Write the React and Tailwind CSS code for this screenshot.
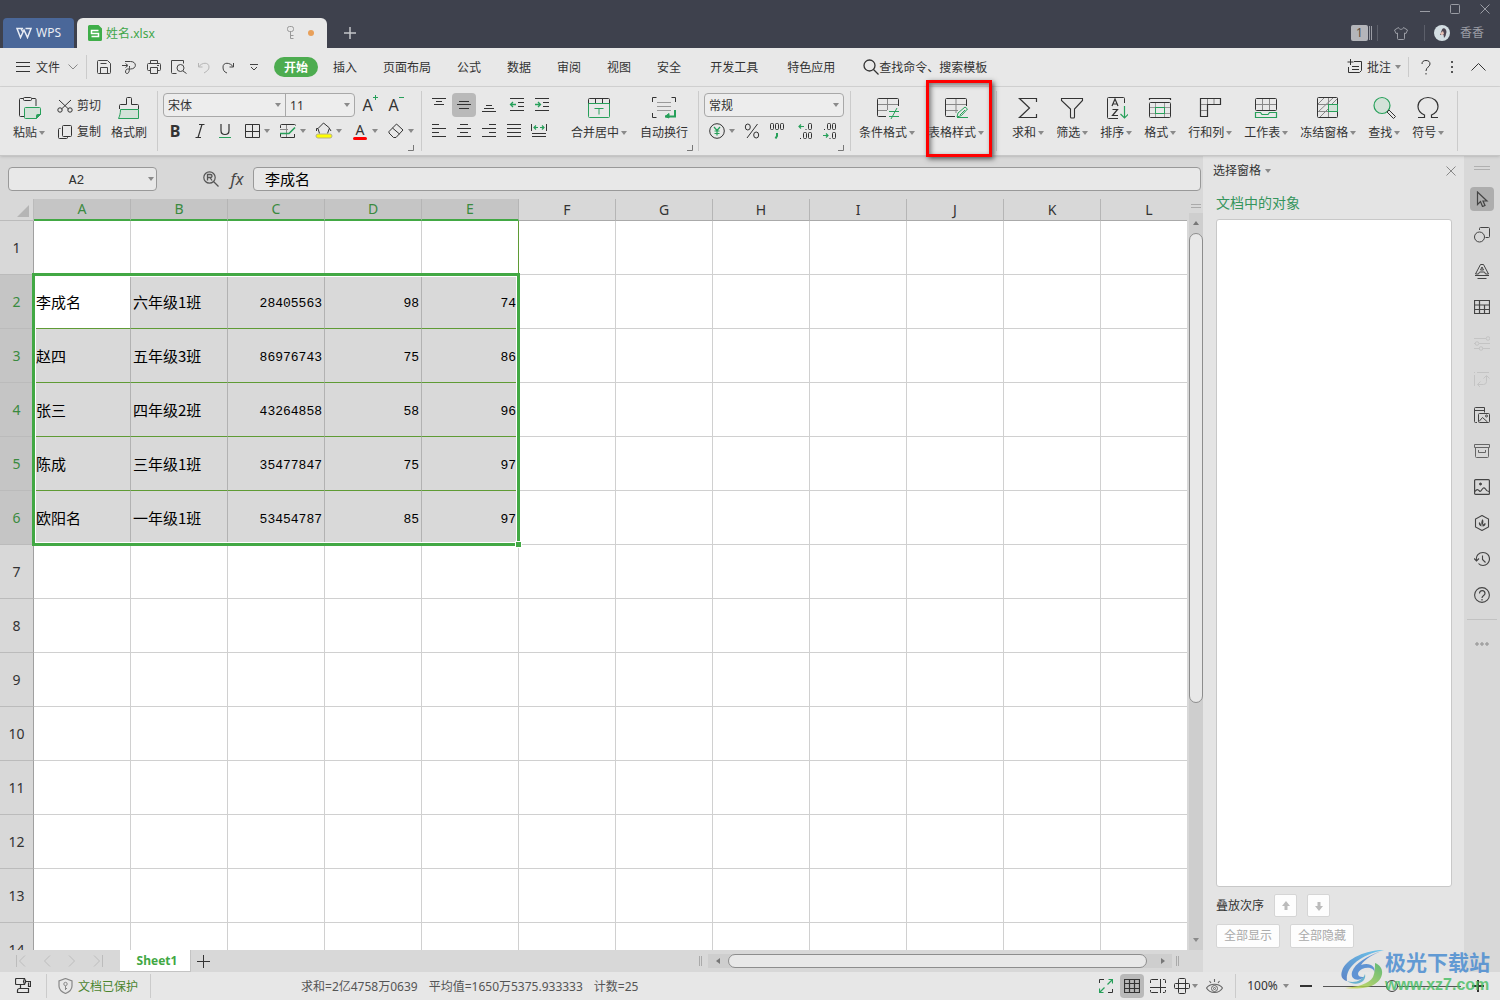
import { useState } from 'react';
import clsx from 'clsx';

const TABS = ['插入', '页面布局', '公式', '数据', '审阅', '视图', '安全'];
const EXTRA_TABS = ['开发工具', '特色应用'];
const COLUMNS = ['A', 'B', 'C', 'D', 'E', 'F', 'G', 'H', 'I', 'J', 'K', 'L'];
const ROWS = [1, 2, 3, 4, 5, 6, 7, 8, 9, 10, 11, 12, 13, 14];

const DATA = {
  2: ['李成名', '六年级1班', 28405563, 98, 74],
  3: ['赵四', '五年级3班', 86976743, 75, 86],
  4: ['张三', '四年级2班', 43264858, 58, 96],
  5: ['陈成', '三年级1班', 35477847, 75, 97],
  6: ['欧阳名', '一年级1班', 53454787, 85, 97],
};

const GREEN = '#27a05a';

export default function App() {
  return (
    <div className="flex h-screen flex-col overflow-hidden bg-[#d8d8d8] font-['Noto_Sans','Noto_Sans_CJK_SC',sans-serif] text-xs text-[#333]">
      <TitleBar />
      <MenuBar />
      <Ribbon />
      <main className="flex min-h-0 flex-1">
        <section className="flex min-w-0 flex-1 flex-col">
          <FormulaBar />
          <div className="flex min-h-0 flex-1">
            <Sheet />
            <VerticalScroll />
          </div>
          <SheetTabs />
        </section>
        <ObjectPane />
        <SideBar />
      </main>
      <StatusBar />
    </div>
  );
}

function Svg({ w = 16, h = w, className, children }) {
  return (
    <svg
      width={w}
      height={h}
      viewBox={`0 0 ${w} ${h}`}
      fill="none"
      stroke="currentColor"
      className={clsx('shrink-0', className)}
      aria-hidden="true"
    >
      {children}
    </svg>
  );
}

function Caret({ className }) {
  return (
    <Svg w={6} h={4} className={clsx('text-[#8a8a8a]', className)}>
      <path d="M0 0h6L3 4z" fill="currentColor" stroke="none" />
    </Svg>
  );
}

function Divider({ dark, className }) {
  return <div className={clsx('w-px shrink-0', dark ? 'bg-[#5c5f6a]' : 'bg-[#cbcbcb]', className)} />;
}

function IconButton({ label, className, children }) {
  return (
    <button type="button" aria-label={label} className={clsx('flex shrink-0 items-center justify-center', className)}>
      {children}
    </button>
  );
}

/* ---------- title bar ---------- */

function TitleBar() {
  return (
    <header className="flex h-12 shrink-0 items-end bg-[#3e414d] pl-[3px]">
      <button type="button" className="flex h-[30px] w-[71px] items-center justify-center gap-1 rounded-t bg-[#4a6799] text-[#e8ecf4]">
        <Svg w={16} h={12}>
          <path d="M7 1.5H1l3.5 9L8 3l3.5 7.5 3.500-9H9.500M5 1.500l1.500 3" strokeWidth="1.5" />
        </Svg>
        WPS
      </button>
      <div className="ml-[3px] flex h-[30px] w-[250px] items-center rounded-t-md bg-[#e8e8e8] px-[11px]">
        <Svg w={14} h={16}>
          <path d="M1.5 0h9L14 3.5v11a1.5 1.5 0 0 1-1.5 1.5h-11A1.5 1.5 0 0 1 0 14.5v-13A1.5 1.5 0 0 1 1.5 0z" fill="#3fae49" stroke="none" />
          <path d="M10.5 5.500h-7v3h7v3h-7" stroke="#fff" strokeWidth="1.5" />
        </Svg>
        <span className="ml-1 flex-1 pt-[2px] text-[#3fa648]">姓名.xlsx</span>
        <Svg w={10} h={14} className="text-[#999]">
          <rect x="1.5" y=".5" width="6" height="5" rx="2" />
          <path d="M4.5 5.500v7M4.500 9.500h3M4.500 12.500h3" />
        </Svg>
        <span className="mr-[2px] ml-3 h-[6px] w-[6px] rounded-full bg-[#e8a05a]" />
      </div>
      <IconButton label="新建标签" className="h-[30px] w-[46px] text-[#c4c5c9]">
        <Svg w={12}>
          <path d="M6 0v12M0 6h12" strokeWidth="1.5" />
        </Svg>
      </IconButton>

      <div className="ml-auto flex h-full flex-col items-end text-[#9a9ca4]">
        <div className="flex h-[18px] items-center">
          <IconButton label="最小化" className="h-full w-[30px]">
            <Svg w={10}><path d="M0 7.5h10" /></Svg>
          </IconButton>
          <IconButton label="最大化" className="h-full w-[30px]">
            <Svg w={10}><rect x=".5" y=".5" width="9" height="9" rx="1" /></Svg>
          </IconButton>
          <IconButton label="关闭" className="h-full w-[30px]">
            <Svg w={10}><path d="m.5.5 9 9M9.5.5l-9 9" /></Svg>
          </IconButton>
        </div>
        <div className="flex h-[30px] items-center pr-4">
          <span className="flex h-4 w-[17px] items-center justify-center rounded-[2px] bg-[#b4b5ba] text-[#5b4c3c]">1</span>
          <Svg w={5} h={16}><path d="M1.5 1v14M3.5 1v14" /></Svg>
          <Divider dark className="ml-1 h-4" />
          <IconButton label="换肤" className="w-[46px]">
            <Svg w={14}>
              <path d="M4.5 1.5C5 4 9 4 9.5 1.5l4 2.500L12 7.500 10.500 7v5.500a1 1 0 0 1-1 1h-5a1 1 0 0 1-1-1V7L2 7.500.5 4z" />
            </Svg>
          </IconButton>
          <Divider dark className="h-4" />
          <Svg w={16} className="ml-[9px]">
            <circle cx="8" cy="8" r="8" fill="#d3dde2" stroke="none" />
            <path d="M8 4.500C9.500 2 12.500 4 12.500 7l-1 4-1.500 2-.5-3.500-3.500.5z" fill="#4d4551" stroke="none" />
            <path d="m6 8.500 3-2.500 1 2.500-2 2z" fill="#e8c3b7" stroke="none" />
          </Svg>
          <span className="ml-[10px]">香香</span>
        </div>
      </div>
    </header>
  );
}

/* ---------- menu ---------- */

function MenuBar() {
  return (
    <nav className="flex h-[39px] shrink-0 items-center border-b border-[#d3d3d3] bg-[#e8e8e8]">
      <button type="button" className="ml-4 flex items-center">
        <Svg w={14} h={12}><path d="M0 1.5h14M0 5.5h14M0 10.5h14" /></Svg>
        <span className="ml-[6px] pt-[2px]">文件</span>
        <Svg w={10} h={6} className="ml-2 text-[#888]"><path d="m.5.5 4.500 4.500L9.500.5" /></Svg>
      </button>
      <Divider className="mr-1 ml-2 h-6" />
      <QuickAccess />
      <button type="button" className="mr-[7px] ml-2 h-5 w-11 rounded-full bg-[#4dac50] pt-px font-bold text-white">开始</button>
      <div className="ml-2 flex gap-[26px] pt-[2px]">
        {TABS.map((tab) => <button key={tab} type="button">{tab}</button>)}
      </div>
      <div className="ml-[29px] flex gap-[29px] pt-[2px]">
        {EXTRA_TABS.map((tab) => <button key={tab} type="button">{tab}</button>)}
      </div>
      <button type="button" className="ml-7 flex items-center">
        <Svg w={16}>
          <circle cx="6.5" cy="6.5" r="5.5" strokeWidth="1.3" />
          <path d="m10.5 10.5 5 5" strokeWidth="1.3" />
        </Svg>
        <span className="pt-px">查找命令、搜索模板</span>
      </button>

      <div className="ml-auto flex items-center">
        <button type="button" className="flex items-center">
          <Svg w={16}>
            <path d="M7 2.500h7.500v9l-2 2h-11V8M3.500 0v6M.5 3h6M5 7.500h7M5 10.500h7" />
          </Svg>
          <span className="ml-1 pt-[2px]">批注</span>
          <Caret className="ml-1" />
        </button>
        <Divider className="ml-[7px] h-5" />
        <IconButton label="帮助" className="ml-3 w-[10px]">
          <Svg w={10} h={15}>
            <path d="M1 4C1 1.500 2.500.5 5 .5s4 1.200 4 3.500c0 3-4 3-4 7M5 13v1.500" />
          </Svg>
        </IconButton>
        <IconButton label="更多" className="ml-[19px] w-1 text-[#555]">
          <Svg w={2} h={12}><path d="M1 0v2M1 5v2M1 10v2" strokeWidth="2" /></Svg>
        </IconButton>
        <IconButton label="折叠功能区" className="mr-[14px] ml-[17px]">
          <Svg w={15} h={8}><path d="m.5 7.500 7-7 7 7" /></Svg>
        </IconButton>
      </div>
    </nav>
  );
}

function QuickAccess() {
  return (
    <div className="flex text-[#444]">
      <IconButton label="保存" className="w-[25px]">
        <Svg w={14}>
          <path d="M1.5.5h9l3 3v9a1 1 0 0 1-1 1h-11a1 1 0 0 1-1-1v-11a1 1 0 0 1 1-1zM3.500 13.500v-6h7v6M3.500 3.500h6" />
        </Svg>
      </IconButton>
      <IconButton label="输出为PDF" className="w-[25px]">
        <Svg w={14}>
          <path d="M3 1.500h5.500c6.500 0 6.500 7.500 0 7.500h-3c-2 0-3 4.500-.5 4.500S7.500 9 7.500 6M0 5.500h5M3.500 3.500l2.500 2-2.500 2" />
        </Svg>
      </IconButton>
      <IconButton label="打印" className="w-[25px]">
        <Svg w={14}>
          <path d="M3.500 3.500v-3h7v3M3.500 10.500h-2a1 1 0 0 1-1-1v-5a1 1 0 0 1 1-1h11a1 1 0 0 1 1 1v5a1 1 0 0 1-1 1h-2M3.500 7.500h7v6h-7zM10 5.500h2" />
        </Svg>
      </IconButton>
      <IconButton label="打印预览" className="w-[25px]">
        <Svg w={16} h={14}>
          <path d="M5.500 13.500h-4a1 1 0 0 1-1-1v-12h12v3M12 11l3.500 2.500" />
          <circle cx="9.5" cy="8" r="3.5" />
        </Svg>
      </IconButton>
      <IconButton label="撤销" className="w-[25px] text-[#b5b5b5]">
        <Svg w={13}>
          <path d="M1.500 2v4h4M1.500 6C5 1 12 1 12 6c0 3-2 4-5 6" />
        </Svg>
      </IconButton>
      <IconButton label="恢复" className="w-[25px]">
        <Svg w={13}>
          <path d="M11.500 2v4h-4M11.500 6C8 1 1 1 1 6c0 3 1 5 4 6" />
        </Svg>
      </IconButton>
      <IconButton label="自定义快速访问工具栏" className="w-[25px]">
        <Svg w={8}><path d="M0 1.500h8M1 4l3 3 3-3" /></Svg>
      </IconButton>
    </div>
  );
}

/* ---------- ribbon ---------- */

function BigButton({ label, caret = true, children }) {
  return (
    <button type="button" className="flex shrink-0 flex-col items-center gap-[5px]">
      <Svg w={24}>{children}</Svg>
      <span className="flex h-4 items-center gap-[2px] whitespace-nowrap">
        {label}
        {caret && <Caret />}
      </span>
    </button>
  );
}

function DropIcon({ label, children }) {
  return (
    <button type="button" aria-label={label} className="flex items-center gap-[3px]">
      {children}
      <Caret />
    </button>
  );
}

function Corner() {
  return (
    <Svg w={6} className="mt-1 self-end text-[#777]"><path d="M5.500 0v5.500H0" /></Svg>
  );
}

function Ribbon() {
  return (
    <div className="z-10 flex h-[69px] shrink-0 border-b border-[#c6c6c6] bg-[#e8e8e8] shadow-sm">
      <div className="flex gap-3 pt-[9px] pl-[13px]">
        <BigButton label="粘贴">
          <path d="M7.500 20.500h-4a1 1 0 0 1-1-1v-16a1 1 0 0 1 1-1h3M15 2.500h3a1 1 0 0 1 1 1V10" />
          <rect x="6.500" y="1.500" width="8" height="3" rx="1" />
          <path d="M8.500 11.500h14a1 1 0 0 1 1 1v6l-4 4h-11a1 1 0 0 1-1-1v-9a1 1 0 0 1 1-1z" fill="#d3e2d8" stroke={GREEN} />
          <path d="M23.500 18.500h-3a1 1 0 0 0-1 1v3z" fill={GREEN} stroke={GREEN} />
        </BigButton>
        <div className="flex flex-col gap-[10px] pt-[2px]">
          <button type="button" className="flex h-4 items-center gap-1">
            <Svg w={16} h={14}>
              <path d="m2 1 9.500 9M14 1 4.500 10" />
              <circle cx="3" cy="11" r="2.200" />
              <circle cx="13" cy="11" r="2.200" />
            </Svg>
            剪切
          </button>
          <button type="button" className="flex h-4 items-center gap-1">
            <Svg w={16}>
              <rect x="5.500" y="1.500" width="9" height="11" rx="1" />
              <path d="M3.500 4.500h-1a1 1 0 0 0-1 1v8a1 1 0 0 0 1 1h7a1 1 0 0 0 1-1v-1" />
            </Svg>
            复制
          </button>
        </div>
        <div className="-ml-[2px]">
          <BigButton label="格式刷" caret={false}>
            <path d="M2.500 13V9.500a1 1 0 0 1 1-1h6v-6a1 1 0 0 1 1-1h3a1 1 0 0 1 1 1v6h6a1 1 0 0 1 1 1V13" />
            <path d="M3.500 13.500h18v9h-20c1-2 2-5 2-9z" fill="#d3e2d8" stroke={GREEN} />
          </BigButton>
        </div>
      </div>

      <Divider className="my-1 ml-[10px]" />
      <FontGroup />
      <Divider className="my-1 ml-[7px]" />

      <div className="flex flex-col pt-[6px] pl-[5px]">
        <div className="flex">
          <AlignButtons />
          <div className="ml-[17px] flex gap-[13px] pt-[3px]">
            <BigButton label="合并居中">
              <path d="M1.500 8V3.500a1 1 0 0 1 1-1h19a1 1 0 0 1 1 1V8M8.500 3v4M15.500 3v4" />
              <path d="M1.500 7.500h21v13a1 1 0 0 1-1 1h-19a1 1 0 0 1-1-1zM7.500 12.500h9M12 12.500v6" stroke={GREEN} />
            </BigButton>
            <BigButton label="自动换行" caret={false}>
              <path d="M4.500 1.500h-4V6M19.500 1.500h4V6M.5 17v4.500h4" />
              <path d="M5 6.500h14M5 10.500h14M5 14.500h14" stroke="#999" />
              <path d="M23 14v6.500H13" stroke={GREEN} strokeWidth="2" />
              <path d="m17 17.500-4 3 4 1.500z" stroke={GREEN} fill={GREEN} />
            </BigButton>
          </div>
        </div>
        <div className="-mr-[5px] flex flex-col"><Corner /></div>
      </div>

      <Divider className="my-1 ml-[10px]" />
      <NumberGroup />
      <Divider className="my-1 ml-[6px]" />

      <div className="ml-[8px] flex gap-[13px] pt-[9px]">
        <BigButton label="条件格式">
          <path d="M11 20.500H3.500a1 1 0 0 1-1-1v-16a1 1 0 0 1 1-1h19a1 1 0 0 1 1 1V10" />
          <path d="M3 8.500h20M3 14.500h9M12.500 3v11" stroke="#888" />
          <path d="M14 15.500h10M14 20.500h10M22 12l-6 11" stroke={GREEN} />
        </BigButton>
        <div className="relative">
          <BigButton label="表格样式">
            <path d="M11 20.500H2.500a1 1 0 0 1-1-1v-16a1 1 0 0 1 1-1h19a1 1 0 0 1 1 1V10" />
            <path d="M2 8.500h20M2 14.500h12M12 3v14" stroke="#888" />
            <path d="m13 21 1-4 7-6 2.500 2-6 6.500zM13 21.500h11M16 19l5-5" stroke={GREEN} />
          </BigButton>
          <div className="pointer-events-none absolute -top-4 -left-[2px] h-[77px] w-[66px] border-[3px] border-[#f00] shadow-[2px_2px_5px_#555,inset_2px_2px_5px_#777]" />
        </div>
      </div>

      <Divider className="my-1 ml-[12px]" />

      <div className="ml-[15px] flex gap-3 pt-[9px]">
        <BigButton label="求和">
          <path d="M20.500 6V2.500h-17l10 9.500-10 9.500h17V18" strokeWidth="1.200" />
        </BigButton>
        <BigButton label="筛选">
          <path d="M1.500 2.500h21v2L14.500 13v8a1 1 0 0 1-1 1h-2a1 1 0 0 1-1-1v-8L1.500 4.500z" strokeWidth="1.100" />
        </BigButton>
        <BigButton label="排序">
          <path d="M14 22.500H4.500a1 1 0 0 1-1-1v-19a1 1 0 0 1 1-1h15a1 1 0 0 1 1 1V7" />
          <path d="m8 10 3-7 3 7M9 8h4M8.500 13.500h5l-5 6h5.500" strokeWidth="1.200" />
          <path d="M20.500 10v12M16.500 18l4 4 4-4" stroke={GREEN} strokeWidth="1.200" />
        </BigButton>
        <BigButton label="格式">
          <path d="M1.500 4V2.500h21V4" strokeWidth="1.200" />
          <rect x="1.500" y="6.500" width="21" height="15" rx="1" />
          <path d="M2 11.500h20M2 17.500h20M7.500 7v14M16.500 7v14" stroke="#999" />
          <rect x="7.500" y="11.500" width="9" height="6" stroke={GREEN} fill="#e8e8e8" />
        </BigButton>
        <BigButton label="行和列">
          <path d="M2.500 2.500h20v6h-13v12h-7z" strokeWidth="1.200" />
          <path d="M9.500 3v5M16 3v5M3 8.500h6M3 14.500h6" stroke="#888" />
        </BigButton>
        <BigButton label="工作表">
          <rect x="1.500" y="2.500" width="21" height="12" rx="1" />
          <path d="M2 8.500h20M8.500 3v11M15.500 3v11" stroke="#888" />
          <path d="M1.500 21.500v-5h5l1.500 2h6l1.500-2h7v5z" stroke={GREEN} strokeWidth="1.200" />
        </BigButton>
        <BigButton label="冻结窗格">
          <path d="M2 8.500h20M2 15.500h10M12.500 2v20M2 8l6-6M3 15l14-13M3 22l9-9M16 8l6-6" stroke="#888" />
          <rect x="1.500" y="1.500" width="20" height="20" rx="1" />
          <rect x="12.500" y="8.500" width="9" height="7" stroke={GREEN} fill="#d3e2d8" />
        </BigButton>
        <BigButton label="查找">
          <circle cx="10" cy="9.500" r="8" stroke={GREEN} fill="#d3e2d8" strokeWidth="1.200" />
          <path d="m15 16 2-2 6.500 6.500-2 2z" />
        </BigButton>
        <BigButton label="符号">
          <path d="M2 21.500h6.500V19C4 17 2 14 2 10.500 2 5 6.500 1.500 12 1.500S22 5 22 10.500C22 14 20 17 15.500 19v2.500H22" strokeWidth="1.200" />
        </BigButton>
      </div>
      <Divider className="my-1 ml-[13px]" />
    </div>
  );
}

function FontGroup() {
  return (
    <div className="flex flex-col pt-[6px] pl-[5px]">
      <div className="flex h-6 items-center">
        <div className="flex h-6 rounded border border-[#a8a8a8] bg-[#ededed]">
          <Select label="字体" value="宋体" className="w-[121px]" />
          <div className="w-px bg-[#a8a8a8]" />
          <Select label="字号" value="11" className="w-[68px]" />
        </div>
        <IconButton label="增大字号" className="ml-[6px] w-[18px] items-start text-base leading-5">
          A<Svg w={5} className="text-[#27a05a]"><path d="M0 2.500h5M2.500 0v5" /></Svg>
        </IconButton>
        <IconButton label="减小字号" className="ml-2 w-[18px] items-start text-base leading-5">
          A<Svg w={5} className="text-[#27a05a]"><path d="M0 2.500h5" /></Svg>
        </IconButton>
      </div>
      <div className="mt-1 flex h-5 items-center">
        <button type="button" className="w-6 text-base leading-5 font-bold">B</button>
        <IconButton label="倾斜" className="w-[25px]">
          <Svg w={10} h={14}><path d="M4 .5h5.500M.5 13.500H6M7 .5l-4 13" strokeWidth="1.200" /></Svg>
        </IconButton>
        <IconButton label="下划线" className="mr-[6px] w-[25px]">
          <Svg w={12} h={14}>
            <path d="M2 0v6.500C2 9 3.500 10.500 6 10.500S10 9 10 6.500V0" strokeWidth="1.200" />
            <path d="M0 13.500h12" stroke={GREEN} />
          </Svg>
        </IconButton>
        <div className="flex gap-[9px]">
          <DropIcon label="边框">
            <Svg w={18}><path d="M2.500 2.500h14v13h-14zM2.500 9.500h14M9.500 2.500v13" /></Svg>
          </DropIcon>
          <DropIcon label="绘图边框">
            <Svg w={18}>
              <path d="M1.500 6V3.500a1 1 0 0 1 1-1h13a1 1 0 0 1 1 1M1.500 12v2.500a1 1 0 0 0 1 1h13V12" />
              <path d="M7.500 3v12M1 7.500h8" stroke="#888" />
              <path d="M1 11.500h9l6-6" stroke={GREEN} strokeWidth="1.600" />
            </Svg>
          </DropIcon>
          <DropIcon label="填充颜色">
            <Svg w={18}>
              <path d="M4.500 11.500 3 6.500 8.500 1l6 5-2 5.500M3 6.500H1.500V9M14.500 6.500 16 9" />
              <rect x="1" y="12" width="16" height="4" rx="2" fill="#ff0" stroke="#b5b08a" />
            </Svg>
          </DropIcon>
          <DropIcon label="字体颜色">
            <span className="flex w-[18px] flex-col items-center text-sm leading-[14px]">
              A
              <span className="h-[3px] w-[14px] rounded-full bg-[#f00]" />
            </span>
          </DropIcon>
          <DropIcon label="清除">
            <Svg w={18}><path d="m2 9.500 7.500-7.500 6.500 6-7 7.500H6.500L2 11zM5.500 6l7 6" /></Svg>
          </DropIcon>
        </div>
      </div>
      <Corner />
    </div>
  );
}

function Select({ label, value, className }) {
  return (
    <label className={clsx('relative flex items-center', className)}>
      <select aria-label={label} defaultValue={value} className="h-full w-full appearance-none bg-transparent pt-[2px] pl-1 outline-none">
        <option>{value}</option>
      </select>
      <Caret className="pointer-events-none absolute right-1" />
    </label>
  );
}

function AlignButtons() {
  const cell = 'h-6 w-6';
  const lowCell = 'h-5 w-6';
  return (
    <div className="flex flex-col gap-1">
      <div className="flex gap-px">
        <IconButton label="顶端对齐" className={cell}>
          <Svg w={14}><path d="M0 .5h14M4 3.500h6M2 6.500h10" /></Svg>
        </IconButton>
        <IconButton label="垂直居中" className="h-6 w-6 rounded bg-[#b9b9b9]">
          <Svg w={14}><path d="M2 3.500h10M0 6.500h14M2 10.500h10" /></Svg>
        </IconButton>
        <IconButton label="底端对齐" className={cell}>
          <Svg w={14}><path d="M4 7.500h6M2 10.500h10M0 13.500h14" /></Svg>
        </IconButton>
        <IconButton label="减少缩进" className="ml-[3px] h-6 w-6">
          <Svg w={16} h={14}>
            <path d="M1 .5h14M9 4.500h6M9 8.500h6M1 12.500h14" />
            <path d="M7 6.500H1.500M4 4 1.500 6.500 4 9" stroke={GREEN} strokeWidth="1.300" />
          </Svg>
        </IconButton>
        <IconButton label="增加缩进" className={cell}>
          <Svg w={16} h={14}>
            <path d="M1 .5h14M9 4.500h6M9 8.500h6M1 12.500h14" />
            <path d="M1 6.500h5.500M4 4l2.500 2.500L4 9" stroke={GREEN} strokeWidth="1.300" />
          </Svg>
        </IconButton>
      </div>
      <div className="flex gap-px">
        <IconButton label="左对齐" className={lowCell}>
          <Svg w={14}><path d="M0 .5h7M0 4.500h14M0 8.500h7M0 12.500h14" /></Svg>
        </IconButton>
        <IconButton label="水平居中" className={lowCell}>
          <Svg w={14}><path d="M3 .5h8M0 4.500h14M3 8.500h8M0 12.500h14" /></Svg>
        </IconButton>
        <IconButton label="右对齐" className={lowCell}>
          <Svg w={14}><path d="M7 .5h7M0 4.500h14M7 8.500h7M0 12.500h14" /></Svg>
        </IconButton>
        <IconButton label="两端对齐" className={lowCell}>
          <Svg w={14}><path d="M0 .5h14M0 4.500h14M0 8.500h14M0 12.500h14" /></Svg>
        </IconButton>
        <IconButton label="分散对齐" className={lowCell}>
          <Svg w={16} h={14}>
            <path d="M.5 0v7M15.500 0v7M1 9.500h14M1 12.500h14" />
            <path d="M3 3.500h4M9 3.500h4M5 1.500l-2 2 2 2M11 1.500l2 2-2 2" stroke={GREEN} strokeWidth="1.200" />
          </Svg>
        </IconButton>
      </div>
    </div>
  );
}

function NumberGroup() {
  return (
    <div className="flex flex-col pt-[6px] pl-[5px]">
      <div className="flex h-6 rounded border border-[#a8a8a8] bg-[#ededed]">
        <Select label="数字格式" value="常规" className="w-[138px]" />
      </div>
      <div className="mt-1 flex h-5 items-center">
        <button type="button" aria-label="货币" className="ml-[5px] flex items-center gap-1">
          <Svg w={16}>
            <circle cx="8" cy="8" r="7.300" />
            <path d="m5 4 3 3.500L11 4M8 7.500v5M5.500 8h5M5.500 10.500h5" stroke={GREEN} strokeWidth="1.200" />
          </Svg>
          <Caret />
        </button>
        <IconButton label="百分比" className="ml-2 w-[18px]">
          <Svg w={16}>
            <path d="M13.500 1 3 15" />
            <ellipse cx="3.800" cy="4" rx="2.500" ry="3" />
            <ellipse cx="12.200" cy="12" rx="2.500" ry="3" />
          </Svg>
        </IconButton>
        <IconButton label="千位分隔" className="ml-2 w-4">
          <Svg w={16}>
            <rect x="1.500" y=".5" width="3" height="6" rx="1" />
            <rect x="6.500" y=".5" width="3" height="6" rx="1" />
            <rect x="11.500" y=".5" width="3" height="6" rx="1" />
            <path d="M8 10v3l-1.500 2.500" stroke={GREEN} strokeWidth="2" />
          </Svg>
        </IconButton>
        <IconButton label="增加小数位" className="ml-[13px] w-4">
          <Svg w={16}>
            <path d="M6 3.500H1M3 1.500l-2 2 2 2" stroke={GREEN} strokeWidth="1.200" />
            <rect x="10.500" y=".5" width="3" height="6" rx="1" />
            <rect x="5.500" y="9.500" width="3" height="6" rx="1" />
            <rect x="10.500" y="9.500" width="3" height="6" rx="1" />
            <path d="M7.500 6.500h1M2 15.500h1" />
          </Svg>
        </IconButton>
        <IconButton label="减少小数位" className="ml-2 w-4">
          <Svg w={16}>
            <rect x="5.500" y=".5" width="3" height="6" rx="1" />
            <rect x="10.500" y=".5" width="3" height="6" rx="1" />
            <rect x="10.500" y="9.500" width="3" height="6" rx="1" />
            <path d="M1 12.500h5M4 10.500l2 2-2 2" stroke={GREEN} strokeWidth="1.200" />
            <path d="M2 6.500h1M7.500 15.500h1" />
          </Svg>
        </IconButton>
      </div>
      <Corner />
    </div>
  );
}

/* ---------- sheet ---------- */

function FormulaBar() {
  return (
    <div className="flex h-[43px] shrink-0 items-center pt-[2px] pr-[2px] pl-2">
      <label className="relative flex w-[149px] items-center">
        <input
          aria-label="名称框"
          defaultValue="A2"
          className="h-6 w-full rounded border border-[#999] bg-[#e8e8e8] pt-[3px] pr-3 text-center font-['Liberation_Mono',monospace] text-[13px] outline-none"
        />
        <Caret className="pointer-events-none absolute right-[3px]" />
      </label>
      <IconButton label="浏览公式结果" className="ml-[46px] text-[#555]">
        <Svg w={16}>
          <circle cx="6.500" cy="6.500" r="5.700" strokeWidth="1.200" />
          <path d="M4.500 9.500v-6h3c2 0 2 3 0 3h-3M7 6.500l2 3M10.500 10.500l5 5" strokeWidth="1.300" />
        </Svg>
      </IconButton>
      <button type="button" className="ml-[10px] w-4 text-base leading-5 text-[#444] italic">fx</button>
      <input
        aria-label="编辑栏"
        defaultValue="李成名"
        className="ml-2 h-6 min-w-0 flex-1 rounded border border-[#999] bg-[#e8e8e8] px-[11px] text-[15px] text-black outline-none"
      />
    </div>
  );
}

function Sheet() {
  return (
    <div className="relative min-w-0 flex-1 overflow-hidden bg-white">
      <table className="w-[1198px] table-fixed border-separate border-spacing-0">
        <thead>
          <tr className="h-[22px] text-sm leading-5">
            <th className="w-[34px] border-r border-b border-[#bbb] bg-[#d8d8d8] p-0">
              <Svg w={33} h={20} className="text-[#b5b5b5]">
                <path d="M29 5v12H17z" fill="currentColor" stroke="none" />
              </Svg>
            </th>
            {COLUMNS.map((col, i) => (
              <th
                key={col}
                scope="col"
                className={clsx(
                  'w-[97px] border-r border-r-[#b5b5b5] p-0 font-normal',
                  i < 5 ? 'border-b-2 border-b-[#42a844] bg-[#c5c5c5] text-[#3a8a3f]' : 'border-b border-b-[#aaa] bg-[#d8d8d8]',
                )}
              >
                {col}
              </th>
            ))}
          </tr>
        </thead>
        <tbody>
          {ROWS.map((row) => (
            <tr key={row} className="h-[54px]">
              <th
                scope="row"
                className={clsx(
                  'border-r border-b border-r-[#a0a0a0] border-b-[#bbb] p-0 text-sm font-normal',
                  DATA[row] ? 'bg-[#c5c5c5] text-[#3a8a3f]' : 'bg-[#d8d8d8]',
                )}
              >
                {row}
              </th>
              {COLUMNS.map((col, i) => <Cell key={col} row={row} index={i} />)}
            </tr>
          ))}
        </tbody>
      </table>

      {/* selection A2:E6 */}
      <div className="pointer-events-none absolute top-[74px] left-8 h-[273px] w-[488px] border-[3px] border-[#42a844] inset-ring inset-ring-white">
        <span className="absolute -right-[5px] -bottom-[5px] h-[7px] w-[7px] border border-white bg-[#42a844]" />
      </div>
    </div>
  );
}

function rightBorder(row, index, selected) {
  if (row === 1 && index === 4) return 'border-r-[#5f9b35]';
  return selected ? 'border-r-[#b2b2b2]' : 'border-r-[#d0d0d0]';
}

function Cell({ row, index }) {
  const value = DATA[row]?.[index];
  const selected = value !== undefined;
  const isNumber = typeof value === 'number';
  return (
    <td
      className={clsx(
        'border-r border-b px-[2px] whitespace-nowrap text-black',
        rightBorder(row, index, selected),
        selected ? 'border-b-[#5f9b35]' : 'border-b-[#d0d0d0]',
        selected && !(row === 2 && index === 0) && 'bg-[#d9d9d9]',
        isNumber
          ? "pt-1 pb-0 text-right font-['Liberation_Mono',monospace] text-[13px]"
          : "py-0 font-['Noto_Sans_CJK_SC',sans-serif] text-[15px] leading-5",
      )}
    >
      {value}
    </td>
  );
}

function VerticalScroll() {
  return (
    <div className="flex w-4 shrink-0 flex-col items-end">
      <Svg w={14} h={14} className="text-[#aaa]"><path d="M2 5.500h10M2 8.500h10" /></Svg>
      <div className="flex w-[14px] flex-1 flex-col items-center bg-[#cecece]">
        <Svg w={6} h={4} className="my-2 text-[#777]"><path d="M0 4h6L3 0z" fill="currentColor" stroke="none" /></Svg>
        <div className="w-full flex-[471] rounded-full border border-[#8d8d8d] bg-[#e8e8e8]" />
        <div className="flex-[228]" />
        <Caret className="my-2" />
      </div>
    </div>
  );
}

function SheetTabs() {
  return (
    <div className="flex h-[22px] shrink-0 items-center">
      <div className="flex w-[120px] items-center gap-[17px] pl-4 text-[#bcbcbc]">
        <IconButton label="第一个工作表"><Svg w={10} h={12}><path d="M.5 0v12M9 .5 3.500 6 9 11.500" /></Svg></IconButton>
        <IconButton label="上一个工作表"><Svg w={8} h={12}><path d="M7 .5 1.500 6 7 11.500" /></Svg></IconButton>
        <IconButton label="下一个工作表"><Svg w={8} h={12}><path d="M1 .5 6.500 6 1 11.500" /></Svg></IconButton>
        <IconButton label="最后一个工作表"><Svg w={10} h={12}><path d="M9.500 0v12M1 .5 6.500 6 1 11.500" /></Svg></IconButton>
      </div>
      <button type="button" className="h-full w-[71px] border-r border-b border-[#c4c4c4] bg-white pt-px pl-1 font-bold text-[#42a844]">Sheet1</button>
      <IconButton label="新建工作表" className="ml-[6px]">
        <Svg w={13}><path d="M6.500 0v13M0 6.500h13" /></Svg>
      </IconButton>
      <div className="ml-auto flex w-[504px] items-center text-[#777]">
        <Svg w={4} h={10}><path d="M.5 0v10M2.500 0v10" stroke="#aaa" /></Svg>
        <div className="ml-[5px] flex h-[14px] flex-1 items-center bg-[#cecece]">
          <Svg w={4} h={6} className="mx-2"><path d="M4 0v6L0 3z" fill="currentColor" stroke="none" /></Svg>
          <div className="h-full flex-1 rounded-full border border-[#8d8d8d] bg-[#e8e8e8]" />
          <Svg w={4} h={6} className="mr-[7px] ml-[14px]"><path d="M0 0v6l4-3z" fill="currentColor" stroke="none" /></Svg>
        </div>
        <Svg w={4} h={10} className="mr-[23px] ml-1"><path d="M.5 0v10M2.500 0v10" stroke="#aaa" /></Svg>
      </div>
    </div>
  );
}

/* ---------- right side ---------- */

function ObjectPane() {
  const box = 'border border-[#d5d5d5] bg-[#fdfdfd] rounded-[2px] text-[#aaa]';
  return (
    <aside className="flex w-[261px] shrink-0 flex-col bg-[#e4e4e4] px-[13px] pb-6">
      <div className="-mr-[5px] -ml-[3px] mt-[7px] flex h-4 items-center justify-between">
        <button type="button" className="flex items-center gap-1">选择窗格<Caret /></button>
        <IconButton label="关闭窗格" className="text-[#888]">
          <Svg w={10}><path d="m.5.5 9 9M9.500.5l-9 9" /></Svg>
        </IconButton>
      </div>
      <h2 className="mt-[14px] text-sm leading-5 text-[#35955c]">文档中的对象</h2>
      <div className="mt-[6px] -mr-px flex-1 rounded-[3px] border border-[#c8c8c8] bg-white" />
      <div className="mt-[7px] flex h-[23px] items-center">
        <span>叠放次序</span>
        <IconButton label="上移" className={clsx(box, 'ml-[10px] h-[23px] w-[23px]')}>
          <Svg w={10} className="text-[#bbb]"><path d="M5 0 1 5h2.500v4h3V5H9z" fill="currentColor" stroke="none" /></Svg>
        </IconButton>
        <IconButton label="下移" className={clsx(box, 'ml-[10px] h-[23px] w-[23px]')}>
          <Svg w={10} className="text-[#bbb]"><path d="M5 10 1 5h2.500V1h3v4H9z" fill="currentColor" stroke="none" /></Svg>
        </IconButton>
      </div>
      <div className="mt-[7px] flex gap-[10px]">
        <button type="button" className={clsx(box, 'h-6 w-16')}>全部显示</button>
        <button type="button" className={clsx(box, 'h-6 w-16')}>全部隐藏</button>
      </div>
    </aside>
  );
}

const TOOLS = [
  {
    label: '选择',
    active: true,
    art: <path d="M3.500 1v12.500l3-3 2 5 2.500-1-2-4.500h4z" strokeWidth="1.200" />,
  },
  {
    label: '形状',
    art: (
      <>
        <circle cx="5.500" cy="10" r="5" />
        <path d="M5.500 3V1.500a1 1 0 0 1 1-1h8a1 1 0 0 1 1 1v8a1 1 0 0 1-1 1h-3" />
      </>
    ),
  },
  {
    label: '艺术字',
    art: (
      <>
        <path d="M1.500 11 6.500 1.500h3l5 9.500h-3l-1-2h-5l-1 2zM6.500 7 8 4l1.500 3z" />
        <path d="M1 12.500h14M3.500 15.500h9" strokeWidth="1.200" />
      </>
    ),
  },
  { label: '表格', art: <path d="M.5 1.500h15v13H.5zM.5 6h15M.5 10.500h15M5.500 1.500v13M10.500 6v8.500" strokeWidth="1.200" /> },
  {
    label: '属性',
    muted: true,
    art: (
      <>
        <path d="M0 3.500h12M0 8.500h1.500M5 8.500h11M0 13.500h5.500M8.500 13.500H16" />
        <circle cx="14" cy="3.500" r="1.800" />
        <circle cx="3" cy="8.500" r="1.800" />
        <circle cx="7" cy="13.500" r="1.800" />
      </>
    ),
  },
  { label: '转置', muted: true, art: <path d="M3 1.500h12M.5 4v11M.5 1v1M3.500 13.500h6a3 3 0 0 0 3-3V5M9.500 7.500l3-3 3 3M6.500 10.500l-3 3 3 3" /> },
  {
    label: '图库',
    art: (
      <>
        <path d="M3 15.500H1.500a1 1 0 0 1-1-1v-13a1 1 0 0 1 1-1h9v5M.5 3.500h10" />
        <rect x="4.500" y="6.500" width="11" height="9" rx="1" />
        <path d="m5 14.500 3.500-4 5 4.500" />
        <circle cx="12.500" cy="9" r="1" />
      </>
    ),
  },
  { label: '存档', art: <path d="M.5 1.500h15v3H.5zM1.500 4.500v9a1 1 0 0 0 1 1h11a1 1 0 0 0 1-1v-9M4.500 7v2.500h7V7" stroke="#666" /> },
  {
    label: '图片',
    art: (
      <>
        <rect x=".6" y=".6" width="14.800" height="14.800" rx="1" strokeWidth="1.200" />
        <path d="M1 12.500c2-3 3-2 4.500-.5 2 2 3-6 6-2 1 2 2 2.500 3.500 2.500" strokeWidth="1.200" />
        <circle cx="6.500" cy="5" r="1" fill="currentColor" />
      </>
    ),
  },
  {
    label: '稻壳',
    art: (
      <>
        <path d="m8 .5 6.500 3.500v8L8 15.500 1.500 12V4z" strokeWidth="1.100" />
        <path d="M8.500 4c1.500 2 1 4-.5 7-1-2-1-5 .5-7zM5 7c1.500 1 2 2 2.500 4.500C5 11 4.500 9 5 7zM11.500 8c.5 2-1 3.500-3 3.500 0-2 1-3 3-3.500z" fill="currentColor" stroke="none" />
      </>
    ),
  },
  {
    label: '历史版本',
    art: <path d="M2.500 9.500C1.500 4.500 5 1.500 9 1.500s6.500 3 6.500 6.500-3 6.500-6.500 6.500c-2 0-3.500-.8-4.500-2M0 7.500 2.500 10 5 7.500M8.500 4.500v4l3 3" strokeWidth="1.100" />,
  },
  {
    label: '帮助',
    art: (
      <>
        <circle cx="8" cy="8" r="7.400" strokeWidth="1.100" />
        <path d="M5.500 6.500c0-4 5.500-3.500 5.500 0C11 8.500 8 8.500 8 11M8 12v1.500" strokeWidth="1.200" />
      </>
    ),
  },
];

function SideBar() {
  return (
    <aside className="flex w-9 shrink-0 flex-col items-center bg-[#d8d8d8] text-[#444]">
      <Svg w={16} h={5} className="mt-[10px] text-[#b0b0b0]"><path d="M0 .5h16M0 3.500h16" /></Svg>
      <div className="mt-4 flex flex-col gap-3">
        {TOOLS.map((tool) => (
          <IconButton
            key={tool.label}
            label={tool.label}
            className={clsx('h-6 w-6 rounded pr-px', tool.active && 'bg-[#adadad]', tool.muted && 'text-[#c4c4c4]')}
          >
            <Svg w={16}>{tool.art}</Svg>
          </IconButton>
        ))}
      </div>
      <div className="mt-3 h-px w-[30px] bg-[#c2c2c2]" />
      <IconButton label="更多工具" className="mt-4 h-4 text-[#888]">
        <Svg w={14} h={4}>
          <circle cx="2" cy="2" r="1.200" />
          <circle cx="7" cy="2" r="1.200" />
          <circle cx="12" cy="2" r="1.200" />
        </Svg>
      </IconButton>
    </aside>
  );
}

/* ---------- status bar ---------- */

function StatusBar() {
  const [zoom, setZoom] = useState(100);

  return (
    <footer className="relative flex h-7 shrink-0 items-center bg-[#e7e7e7]">
      <IconButton label="宏" className="ml-[15px]">
        <Svg w={16}>
          <path d="M1.500.5h8l-1 3 1 3h-8a1 1 0 0 1-1-1v-4a1 1 0 0 1 1-1zM10.500 5.500v-4M10.500 3.500h5v5h-2v-4M5.500 7v4M2.500 14.500h11v-4h-9a2 2 0 0 0-2 2z" strokeWidth="1.200" />
        </Svg>
      </IconButton>
      <Divider className="ml-[15px] h-6" />
      <button type="button" className="ml-[11px] flex items-center gap-[5px] text-[#4c8530]">
        <Svg w={15} h={16} className="text-[#888]">
          <path d="m7.500.5 6.500 2.500v5c0 4-3 6-6.500 7.500C4 14 1 12 1 8V3z" strokeWidth="1.200" />
          <circle cx="7.500" cy="6" r="1.700" />
          <path d="M7.500 8v4M7.500 10.500H9" />
        </Svg>
        <span className="pt-px">文档已保护</span>
      </button>
      <Divider className="ml-3 h-6" />
      <div className="ml-[150px] flex gap-[11px] pt-px whitespace-nowrap text-[#555]">
        <span>求和=2亿4758万0639</span>
        <span>平均值=1650万5375.933333</span>
        <span>计数=25</span>
      </div>

      <div className="ml-auto flex items-center">
        <IconButton label="全屏显示" className="h-6 w-6">
          <Svg w={14}>
            <path d="M.5 4V.5H5M13.500 10v3.500H9" />
            <path d="M8.500 5.500 13 1M9.500.5h4v4M5.500 8.500 1 13M.5 9.500v4h4" stroke={GREEN} strokeWidth="1.200" />
          </Svg>
        </IconButton>
        <IconButton label="普通视图" className="ml-[2px] h-6 w-6 rounded bg-[#b9b9b9]">
          <Svg w={16} h={14}><path d="M.5.5h15v13H.5zM.5 4.500h15M.5 9.500h15M5.500.5v13M10.500.5v13" strokeWidth="1.200" /></Svg>
        </IconButton>
        <IconButton label="分页预览" className="ml-[2px] h-6 w-6">
          <Svg w={16} h={14}>
            <path d="M.5 4V1.500a1 1 0 0 1 1-1H8M10.500 0v14M13 .5h1.500a1 1 0 0 1 1 1V4M0 8.500h16M.5 11v1.500a1 1 0 0 0 1 1H8M13 13.500h1.500a1 1 0 0 0 1-1V11" />
          </Svg>
        </IconButton>
        <button type="button" aria-label="阅读模式" className="ml-1 flex items-center gap-[2px]">
          <Svg w={16}>
            <rect x="4.500" y=".5" width="7" height="15" rx="1" />
            <path d="M4.500 5.500h-3a1 1 0 0 0-1 1v3a1 1 0 0 0 1 1h13a1 1 0 0 0 1-1v-3a1 1 0 0 0-1-1z" />
          </Svg>
          <Caret />
        </button>
        <IconButton label="护眼模式" className="ml-2 text-[#666]">
          <Svg w={17} h={16}>
            <path d="M.5 10C4 5 13 5 16.500 10 13 16 4 16 .5 10zM3.500 3 5 5M8.500 1v3M13.500 3 12 5" strokeWidth="1.100" />
            <circle cx="8.500" cy="10.500" r="3" />
            <circle cx="8.500" cy="10.500" r="1" />
          </Svg>
        </IconButton>
        <Divider className="ml-3 h-6" />
        <button type="button" className="ml-[10px] flex items-center gap-1">
          <span className="w-[33px]">{zoom}%</span>
          <Caret />
        </button>
        <IconButton label="缩小" className="ml-[11px]">
          <Svg w={12}><path d="M0 6h12" strokeWidth="2" /></Svg>
        </IconButton>
        <input
          type="range"
          aria-label="缩放"
          min="10"
          max="190"
          value={zoom}
          onChange={(e) => setZoom(Number(e.target.value))}
          className="ml-[11px] h-3 w-[138px] appearance-none bg-[linear-gradient(#555,#555)] bg-[length:100%_1px] bg-center bg-no-repeat [&::-webkit-slider-thumb]:h-3 [&::-webkit-slider-thumb]:w-3 [&::-webkit-slider-thumb]:appearance-none [&::-webkit-slider-thumb]:rounded-full [&::-webkit-slider-thumb]:border [&::-webkit-slider-thumb]:border-[#444] [&::-webkit-slider-thumb]:bg-[#e7e7e7]"
        />
        <IconButton label="放大" className="mr-4 ml-[11px]">
          <Svg w={12}><path d="M0 6h12M6 0v12" strokeWidth="2" /></Svg>
        </IconButton>
      </div>

      <Watermark />
    </footer>
  );
}

function Watermark() {
  return (
    <div className="pointer-events-none absolute right-[10px] bottom-[6px] z-20 flex items-center gap-px opacity-80">
      <svg width="43" height="40" viewBox="0 0 43 40" aria-hidden="true">
        <defs>
          <linearGradient id="swirlBlue" x1="0" y1="1" x2="1" y2="0">
            <stop offset="0" stopColor="#3b6cc0" />
            <stop offset="1" stopColor="#4fc0ee" />
          </linearGradient>
          <linearGradient id="swirlGreen" x1="0" y1="1" x2="1" y2="0">
            <stop offset="0" stopColor="#d5dc4a" />
            <stop offset="1" stopColor="#3fae5c" />
          </linearGradient>
        </defs>
        <path d="M43 0C26 0 5 8 1 21c-2 6 1 9 5 10C4 18 18 5 43 0z" fill="url(#swirlBlue)" />
        <path d="M43 0C26 6 14 13 11 22c-2 8 7 10 12 5-7 1-8-5-2-8 7-3 14 0 12 5 3-8-5-12-13-9 4-6 12-11 23-15z" fill="#3f7fd0" />
        <path d="M34 13c10 4 9 15 0 21-8 5-20 5-30 4 12-1 24-4 28-11 2-5 2-9 2-14z" fill="url(#swirlGreen)" />
        <path d="M6 31c8 3 16-1 18-7 2 8-9 13-18 7z" fill="#4aa6c8" />
      </svg>
      <div className="flex flex-col font-bold">
        <span className="font-['Noto_Sans_CJK_SC',sans-serif] text-[21px] leading-[30px] text-[#4288d0]">极光下载站</span>
        <span className="font-['Liberation_Sans',sans-serif] text-base leading-[18px] text-[#45bd62]">www.xz7.com</span>
      </div>
    </div>
  );
}
